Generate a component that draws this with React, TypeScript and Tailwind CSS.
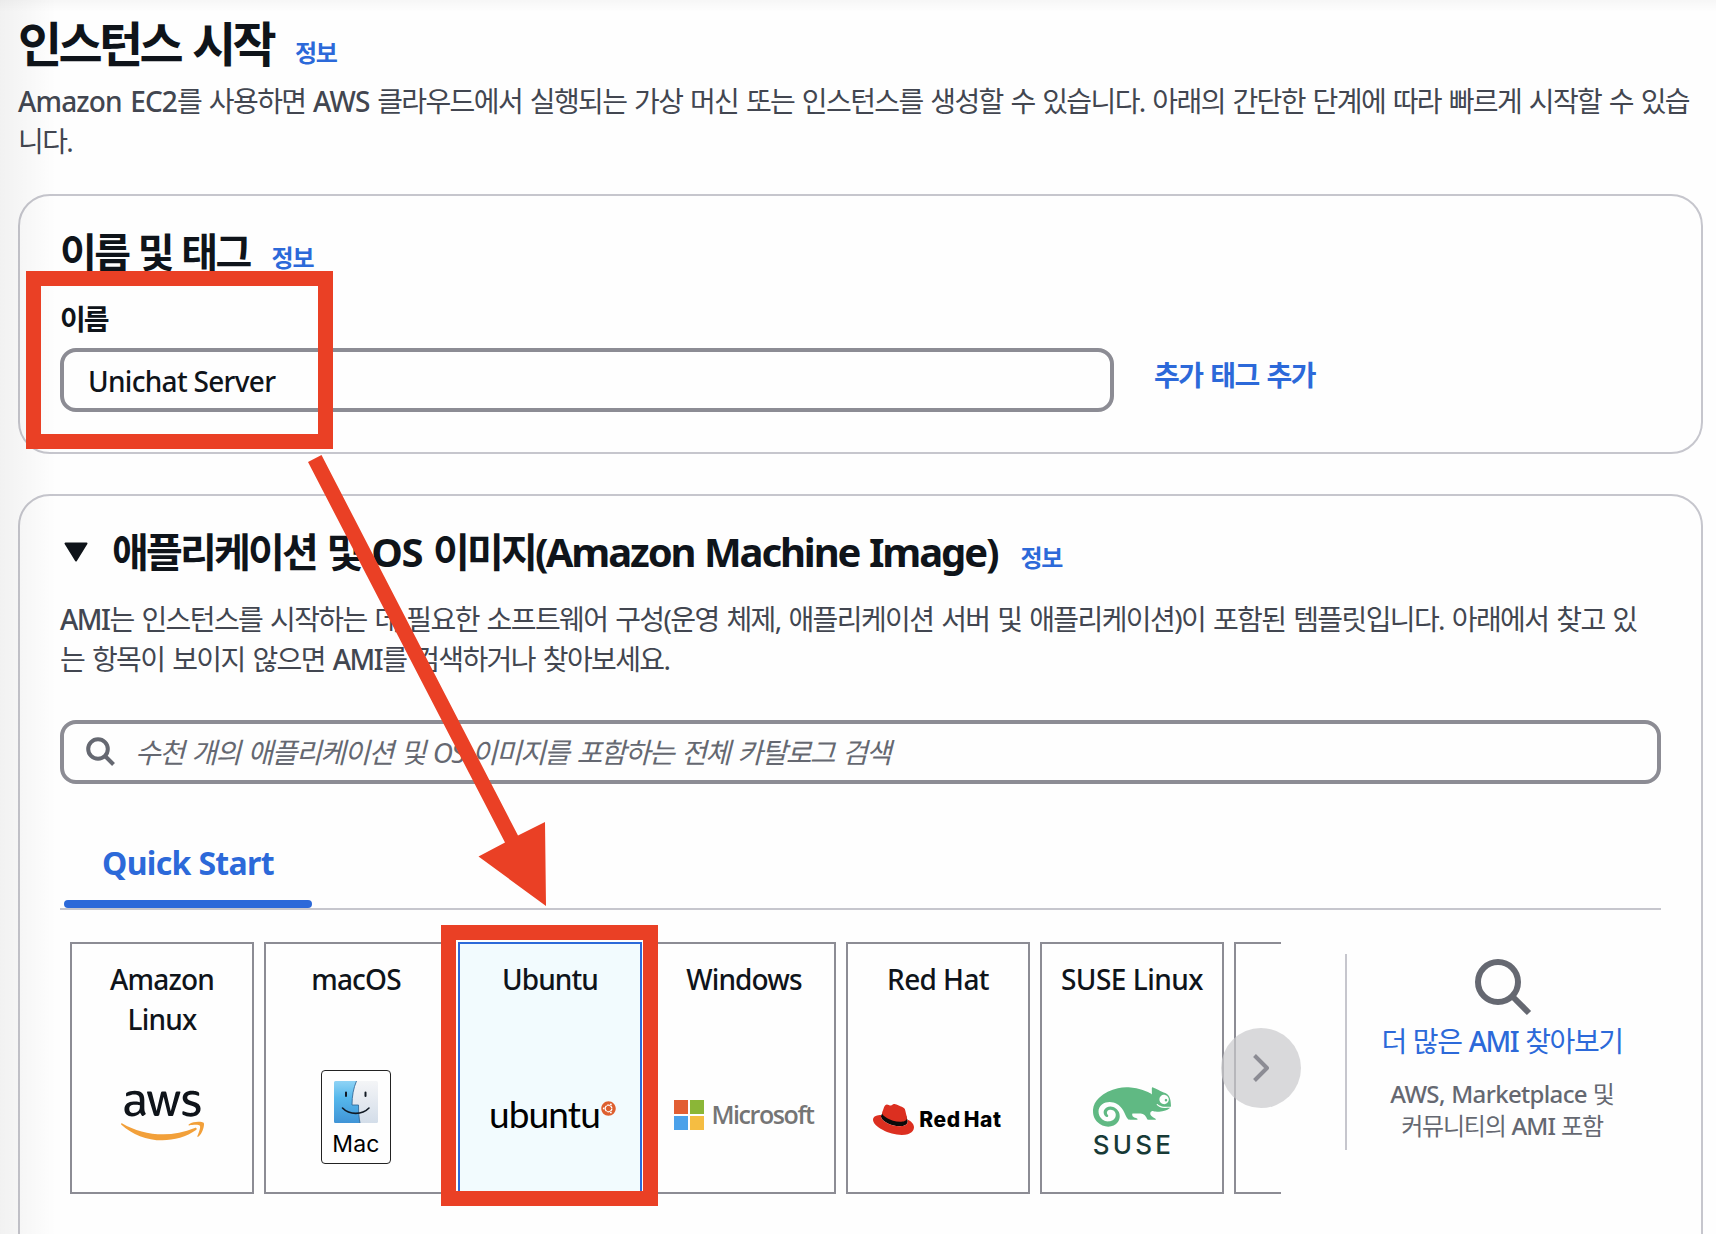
import type { ReactNode } from "react";
import { FaUbuntu } from "react-icons/fa";
import { SiAmazonwebservices, SiSuse } from "react-icons/si";

function InfoLink() {
  return (
    <a className="text-2xl leading-[30px] font-semibold tracking-[-1.3px] text-[#2c69d9]">정보</a>
  );
}

function Latin({ children }: { children: ReactNode }) {
  return <span className="font-medium tracking-[-0.85px]">{children}</span>;
}

function Ami() {
  return <span className="font-medium tracking-[-1.5px]">AMI</span>;
}

function AwsLogo() {
  return (
    <div className="mt-[34px]">
      <svg width="0" height="0" className="absolute">
        <linearGradient id="aws-fill" x1="0" y1="0" x2="0" y2="1">
          <stop offset="0.61" stopColor="#0f141a" />
          <stop offset="0.61" stopColor="#f2a03a" />
        </linearGradient>
      </svg>
      <SiAmazonwebservices size={83} fill="url(#aws-fill)" />
    </div>
  );
}

function MacLogo() {
  return (
    <div className="mt-[30px] flex h-[94px] w-[70px] flex-col items-center rounded-[4px] border border-[#222] pt-[10px]">
      <svg width="44" height="42" viewBox="0 0 44 42">
        <defs>
          <linearGradient id="finder-left" x1="0" y1="0" x2="0" y2="1">
            <stop offset="0" stopColor="#8fd3f5" />
            <stop offset="0.4" stopColor="#56b8ec" />
            <stop offset="1" stopColor="#4094d6" />
          </linearGradient>
          <linearGradient id="finder-right" x1="0" y1="0" x2="0" y2="1">
            <stop offset="0" stopColor="#f4f5f7" />
            <stop offset="1" stopColor="#d3dde9" />
          </linearGradient>
        </defs>
        <rect width="44" height="42" rx="1.5" fill="url(#finder-right)" />
        <path d="M1.5 0H22.5C19.5 7 18 15 18 24H24.5C24.5 31 25 37 26 42H1.5A1.5 1.5 0 0 1 0 40.5V1.5A1.5 1.5 0 0 1 1.5 0Z" fill="url(#finder-left)" />
        <path d="M22.5 0C19.5 7 18 15 18 24H24.5C24.5 31 25 37 26 42" fill="none" stroke="#2b5f8f" strokeWidth="0.8" />
        <path d="M12 11.5v3.5M31.5 11.5v3.5" stroke="#111a24" strokeWidth="2" strokeLinecap="round" />
        <path d="M8.5 27C15.5 34.2 28 34.2 35 27" fill="none" stroke="#111a24" strokeWidth="1.6" strokeLinecap="round" />
      </svg>
      <span className="mt-[6px] font-['Inter'] text-[23px] leading-[30px] tracking-[0.2px] text-black">Mac</span>
    </div>
  );
}

function UbuntuLogo() {
  return (
    <div className="mt-[50px] flex items-start pl-[5px]">
      <span className="font-['Lato'] text-[37px] leading-[48px] tracking-[-0.9px] text-black">ubuntu</span>
      <span className="mt-[11px] ml-[1px] rounded-full bg-white">
        <FaUbuntu size={15} color="#dd5f2f" />
      </span>
    </div>
  );
}

function MicrosoftLogo() {
  return (
    <div className="mt-[57px] flex items-center gap-[7px]">
      <div className="mt-[2px] grid shrink-0 grid-cols-2 gap-[2px]">
        <span className="size-[14px] bg-[#e25e33]" />
        <span className="size-[14px] bg-[#8bb637]" />
        <span className="size-[14px] bg-[#4ba1ea]" />
        <span className="size-[14px] bg-[#f5bd42]" />
      </div>
      <span className="font-['Open_Sans'] text-[25px] leading-[34px] font-semibold tracking-[-1.4px] text-[#757575]">
        Microsoft
      </span>
    </div>
  );
}

function RedHatLogo() {
  return (
    <div className="mt-[59px] flex items-center gap-[5px] pr-[1px]">
      <svg width="41" height="41" viewBox="0 0 24 24">
        <path
          fill="#0a0a0a"
          d="M20.11 11.951c.218 1.032.218 1.14.218 1.277 0 1.765-1.984 2.745-4.593 2.745-5.895.004-11.06-3.451-11.06-5.734a2.326 2.326 0 0 1 .19-.925L6 7.6 19.2 9.2z"
        />
        <path
          fill="#dc2f20"
          d="M16.009 13.386c1.577 0 3.86-.326 3.86-2.202a1.765 1.765 0 0 0-.04-.431l-.94-4.08c-.216-.898-.406-1.305-1.982-2.093-1.223-.625-3.888-1.658-4.676-1.658-.733 0-.947.946-1.822.946-.842 0-1.467-.706-2.255-.706-.757 0-1.25.515-1.63 1.576 0 0-1.06 2.99-1.197 3.424a.81.81 0 0 0-.028.245c0 1.162 4.577 4.974 10.71 4.974m4.101-1.435c.218 1.032.218 1.14.218 1.277 0 1.765-1.984 2.745-4.593 2.745-5.895.004-11.06-3.451-11.06-5.734a2.326 2.326 0 0 1 .19-.925C2.746 9.415 0 9.794 0 12.217c0 3.969 9.405 8.861 16.851 8.861 5.71 0 7.149-2.582 7.149-4.62 0-1.605-1.387-3.425-3.887-4.512"
        />
      </svg>
      <span className="font-['Inter'] text-[21px] leading-[30px] font-extrabold tracking-[0.7px] whitespace-nowrap text-black [word-spacing:-2.6px]">
        Red Hat
      </span>
    </div>
  );
}

function SuseLogo() {
  return (
    <div className="mt-[28px] flex flex-col items-center">
      <SiSuse size={78} color="#60b983" />
      <span className="-mt-[17px] pl-[3px] font-['Inter'] text-[26px] leading-[32px] font-medium tracking-[3.2px] text-[#173a36]">
        SUSE
      </span>
    </div>
  );
}

function Tile({ name, track, selected, children }: { name?: ReactNode; track?: string; selected?: boolean; children?: ReactNode }) {
  return (
    <div
      className={`flex h-[252px] w-[184px] shrink-0 flex-col items-center border-2 pt-[15px] ${
        selected ? "border-[#2c69d9] bg-[#f2fbfe]" : "border-[#8c8c94]"
      }`}
    >
      <div className={`mb-px h-20 text-center text-[28px] leading-10 font-medium whitespace-nowrap text-[#0f141a] ${track ?? ""}`}>{name}</div>
      {children}
    </div>
  );
}

export default function App() {
  return (
    <div className="relative h-[1234px] w-[1716px] overflow-hidden bg-[#fefefe] font-['Noto_Sans','Noto_Sans_CJK_KR',sans-serif] text-[#0f141a]">
      <main className="flex flex-col pr-[13px] pl-[18px]">
        <header className="pt-[14px]">
          <div className="flex items-baseline gap-[22px]">
            <h1 className="text-5xl leading-[60px] font-bold tracking-[-3.7px] [word-spacing:3.5px]">인스턴스 시작</h1>
            <InfoLink />
          </div>
          <p className="mt-[7px] mb-px text-[28px] leading-10 tracking-[-1.6px] whitespace-nowrap text-[#424650] [word-spacing:1.95px]">
            <Latin>Amazon EC2</Latin>를 사용하면 <Latin>AWS</Latin> 클라우드에서 실행되는 가상 머신 또는 인스턴스를 생성할 수 있습니다. 아래의 간단한 단계에 따라 빠르게 시작할 수 있습
            <br />
            니다.
          </p>
        </header>

        <section className="mt-8 h-[260px] rounded-[32px] border-2 border-[#c6c6cd] px-10 pt-8">
          <div className="flex h-12 items-baseline gap-[22px]">
            <h2 className="text-[40px] leading-[48px] font-bold tracking-[-2.6px] [word-spacing:1.5px]">이름 및 태그</h2>
            <InfoLink />
          </div>
          <div className="mt-[23px] text-[28px] leading-10 font-semibold tracking-[-1.9px]">이름</div>
          <div className="mt-[9px] flex items-center gap-10">
            <div className="flex h-16 w-[1054px] items-center rounded-2xl border-4 border-[#8c8c94] px-6 pt-px text-[28px] font-medium tracking-[-0.7px]">
              Unichat Server
            </div>
            <a className="-mt-[10px] text-[28px] leading-10 font-semibold tracking-[-1.5px] text-[#2c69d9] [word-spacing:2px]">추가 태그 추가</a>
          </div>
        </section>

        <section className="mt-10 h-[800px] rounded-[32px] border-2 border-[#c6c6cd] px-10 pt-8">
          <div className="flex h-12 items-baseline">
            <svg width="24" height="20" viewBox="0 0 24 20" className="mr-[24px] ml-1 self-center">
              <path d="M1.5 1.5h21L12 18.5z" fill="#0f141a" stroke="#0f141a" strokeWidth="2" strokeLinejoin="round" />
            </svg>
            <h2 className="text-[40px] leading-[48px] font-bold tracking-[-2.8px] whitespace-nowrap [word-spacing:3px]">
              애플리케이션 및 <span className="tracking-[-1.3px]">OS</span> 이미지(
              <span className="tracking-[-2.1px] [word-spacing:1.2px]">Amazon Machine Image)</span>
            </h2>
            <span className="ml-[23px]">
              <InfoLink />
            </span>
          </div>
          <p className="mt-[23px] text-[28px] leading-10 tracking-[-1.6px] whitespace-nowrap text-[#424650] [word-spacing:2.1px]">
            <Ami />는 인스턴스를 시작하는 데 필요한 소프트웨어 구성(운영 체제, 애플리케이션 서버 및 애플리케이션)이 포함된 템플릿입니다. 아래에서 찾고 있
            <br />는 항목이 보이지 않으면 <Ami />를 검색하거나 찾아보세요.
          </p>
          <div className="mt-[41px] flex h-16 w-[1601px] items-center rounded-2xl border-4 border-[#8c8c94] pl-[22px]">
            <svg width="30" height="30" viewBox="0 0 30 30" fill="none" stroke="#656871" strokeWidth="4">
              <circle cx="12" cy="12" r="9.8" />
              <path d="M19 19l8.5 8.5" />
            </svg>
            <span className="ml-[19px] text-[28px] leading-10 tracking-[-1.6px] whitespace-nowrap text-[#656871] italic [word-spacing:2.3px]">
              수천 개의 애플리케이션 및 OS 이미지를 포함하는 전체 카탈로그 검색
            </span>
          </div>

          <div className="mt-[54px] flex h-[72px] w-[1601px] border-b-2 border-[#c6c6cd] pl-1">
            <div className="flex w-[248px] flex-col items-center justify-between">
              <span className="mt-[5px] text-[32px] leading-[40px] font-bold tracking-[-0.66px] text-[#2c69d9]">Quick Start</span>
              <span className="h-2 w-full rounded-full bg-[#2c69d9]" />
            </div>
          </div>

          <div className="mt-8 flex w-[1601px] items-start">
            <div className="relative w-[1221px]">
              <div className="flex gap-[10px] overflow-hidden pl-[10px]">
                <Tile name={<>Amazon<br />Linux</>} track="tracking-[-0.8px]"><AwsLogo /></Tile>
                <Tile name="macOS" track="tracking-[-0.8px]"><MacLogo /></Tile>
                <Tile name="Ubuntu" track="tracking-[-0.9px]" selected><UbuntuLogo /></Tile>
                <Tile name="Windows" track="tracking-[-0.9px]"><MicrosoftLogo /></Tile>
                <Tile name="Red Hat" track="tracking-[-0.6px]"><RedHatLogo /></Tile>
                <Tile name="SUSE Linux" track="tracking-[-0.5px]"><SuseLogo /></Tile>
                <Tile />
              </div>
              <button className="absolute top-[86px] -right-5 flex size-20 items-center justify-center rounded-full bg-[#c9c9cc]/70">
                <svg width="16" height="28" viewBox="0 0 16 28" fill="none" stroke="#8c8c94" strokeWidth="4">
                  <path d="M1.5 1.5L14 14 1.5 26.5" strokeLinejoin="round" />
                </svg>
              </button>
            </div>
            <div className="mt-3 ml-16 flex h-[196px] flex-1 flex-col items-center border-l-2 border-[#c6c6cd] pt-[5px] pr-1 text-center">
              <svg width="58" height="58" viewBox="0 0 58 58" fill="none" stroke="#656871" strokeWidth="6" className="ml-[2px] shrink-0">
                <circle cx="24" cy="23" r="20" />
                <path d="M38 37l17 17" />
              </svg>
              <a className="mt-1 text-[28px] leading-10 tracking-[-1.4px] whitespace-nowrap text-[#2c69d9] [word-spacing:1.2px]">
                더 많은 <Ami /> 찾아보기
              </a>
              <p className="mt-[17px] text-2xl leading-8 tracking-[-1.2px] whitespace-nowrap text-[#656871] [word-spacing:0.8px]">
                <span className="font-medium tracking-[-0.65px]">AWS, Marketplace</span> 및
                <br />
                커뮤니티의 <Latin>AMI</Latin> 포함
              </p>
            </div>
          </div>
        </section>
      </main>

      {/* soft edge shading */}
      <div className="pointer-events-none absolute inset-y-0 left-0 w-14 bg-gradient-to-r from-black/5 to-transparent" />
      <div className="pointer-events-none absolute inset-x-0 top-0 h-3 bg-gradient-to-b from-black/3 to-transparent" />

      {/* annotations drawn over the form */}
      <div className="pointer-events-none absolute top-[271px] left-[26px] h-[178px] w-[307px] border-[15px] border-[#ea4025]" />
      <div className="pointer-events-none absolute top-[925px] left-[441px] h-[281px] w-[217px] border-[15px] border-[#ea4025]" />
      <svg width="1716" height="1234" viewBox="0 0 1716 1234" className="pointer-events-none absolute inset-0">
        <path d="M308 462L321.5 455 518 835.5 545 822 546 906 478.5 856.5 505 842.5z" fill="#ea4025" />
      </svg>
    </div>
  );
}
